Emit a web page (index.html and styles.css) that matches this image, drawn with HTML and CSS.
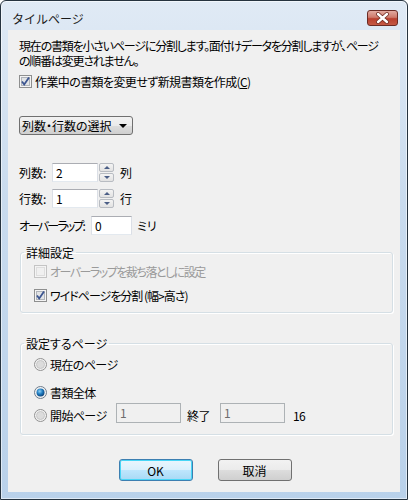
FILE: index.html
```html
<!DOCTYPE html>
<html lang="ja">
  <head>
    <meta charset="UTF-8" />
    <meta name="viewport" content="width=device-width, initial-scale=1.0" />
    <title>タイルページ</title>
    <link rel="stylesheet" href="styles.css">
  </head>

  <body>
    <div class="window">
      <div class="titlebar">
        <span class="title">タイルページ</span>
        <div class="close">
          <svg width="29" height="14" viewBox="0 0 29 14">
            <path d="M10 3 L19 11 M19 3 L10 11" stroke="#6e2a22" stroke-width="4" stroke-linecap="round" fill="none" />
            <path d="M10 3 L19 11 M19 3 L10 11" stroke="#ffffff" stroke-width="2.4" stroke-linecap="round" fill="none" />
          </svg>
        </div>
      </div>

      <div class="client">
        <p class="desc">現在の書類を小さいページに分割します。面付けデータを分割しますが、ページ<br />の順番は変更されません。</p>

        <div class="check-row check-main">
          <svg class="box" width="13" height="13" viewBox="0 0 13 13">
            <rect x="0.5" y="0.5" width="12" height="12" fill="#f4f4f4" stroke="#8e8f8f" />
            <rect x="2.5" y="2.5" width="8" height="8" fill="#e2e4e6" stroke="#b0b4ba" />
            <path d="M3 6.5 L5.2 9.5 L10 2.5" stroke="#3c5590" stroke-width="1.8" fill="none" />
          </svg>
          <span>作業中の書類を変更せず新規書類を作成(<u>C</u>)</span>
        </div>

        <div class="dropdown">
          <span>列数・行数の選択</span>
          <span class="arrow"></span>
        </div>

        <div class="fields">
          <div class="field">
            <span class="lbl lbl-short">列数:</span>
            <span class="input">2</span>
            <span class="spin"><i class="up"></i><i class="down"></i></span>
            <span class="unit">列</span>
          </div>
          <div class="field">
            <span class="lbl lbl-short">行数:</span>
            <span class="input">1</span>
            <span class="spin"><i class="up"></i><i class="down"></i></span>
            <span class="unit">行</span>
          </div>
          <div class="field field-overlap">
            <span class="lbl lbl-long">オーバーラップ:</span>
            <span class="input input-small">0</span>
            <span class="unit">ミリ</span>
          </div>
        </div>

        <fieldset class="group group-detail">
          <legend>詳細設定</legend>
          <div class="check-row disabled">
            <svg class="box" width="13" height="13" viewBox="0 0 13 13">
              <rect x="0.5" y="0.5" width="12" height="12" fill="#f4f4f4" stroke="#c4c4c4" />
              <rect x="2.5" y="2.5" width="8" height="8" fill="#f0f0f0" stroke="#dedede" />
            </svg>
            <span>オーバーラップを裁ち落としに設定</span>
          </div>
          <div class="check-row">
            <svg class="box" width="13" height="13" viewBox="0 0 13 13">
              <rect x="0.5" y="0.5" width="12" height="12" fill="#f4f4f4" stroke="#8e8f8f" />
              <rect x="2.5" y="2.5" width="8" height="8" fill="#e2e4e6" stroke="#b0b4ba" />
              <path d="M3 6.5 L5.2 9.5 L10 2.5" stroke="#3c5590" stroke-width="1.8" fill="none" />
            </svg>
            <span>ワイドページを分割 (幅&gt;高さ)</span>
          </div>
        </fieldset>

        <fieldset class="group group-pages">
          <legend>設定するページ</legend>
          <div class="radio-row">
            <svg class="radio" width="13" height="13" viewBox="0 0 13 13">
              <circle cx="6.5" cy="6.5" r="6" fill="#f2f2f2" stroke="#929292" />
              <circle cx="6.5" cy="6.5" r="4" fill="#dcdcdc" stroke="#c8c8c8" />
            </svg>
            <span>現在のページ</span>
          </div>
          <div class="radio-row">
            <svg class="radio" width="13" height="13" viewBox="0 0 13 13">
              <defs>
                <radialGradient id="dot" cx="0.4" cy="0.35" r="0.7">
                  <stop offset="0" stop-color="#8fd0f5" />
                  <stop offset="0.5" stop-color="#1f7cc0" />
                  <stop offset="1" stop-color="#0b3d72" />
                </radialGradient>
              </defs>
              <circle cx="6.5" cy="6.5" r="6" fill="#f2f2f2" stroke="#6e7c8c" />
              <circle cx="6.5" cy="6.5" r="4" fill="url(#dot)" />
            </svg>
            <span>書類全体</span>
          </div>
          <div class="radio-row range-row">
            <svg class="radio" width="13" height="13" viewBox="0 0 13 13">
              <circle cx="6.5" cy="6.5" r="6" fill="#f2f2f2" stroke="#929292" />
              <circle cx="6.5" cy="6.5" r="4" fill="#dcdcdc" stroke="#c8c8c8" />
            </svg>
            <span class="range-lbl">開始ページ</span>
            <span class="input input-off">1</span>
            <span class="range-mid">終了</span>
            <span class="input input-off">1</span>
            <span class="range-total">16</span>
          </div>
        </fieldset>

        <div class="buttons">
          <button class="btn btn-default">OK</button>
          <button class="btn">取消</button>
        </div>
      </div>
    </div>
  </body>
</html>
```

FILE: styles.css
```css
body {
  margin: 0;
  background: #ffffff;
  font-family: "Noto Sans CJK JP", sans-serif;
  font-size: 12px;
  line-height: 13px;
  color: #000;
  font-feature-settings: "palt";
}

.window {
  width: 408px;
  height: 500px;
  box-sizing: border-box;
  border: 1px solid #26333f;
  border-radius: 6px 6px 0 0;
  padding: 0 7px 7px;
  display: flex;
  flex-direction: column;
  background: linear-gradient(#e0eaf5, #c9dbee 40%, #b9d1ea);
  box-shadow: inset 0 0 0 1px rgba(255, 255, 255, 0.55);
}

.titlebar {
  height: 29px;
  display: flex;
  align-items: flex-start;
  justify-content: space-between;
}

.title {
  margin: 11px 0 0 4px;
  color: #1a1a1a;
  font-feature-settings: normal;
}

.close {
  margin: 9px 2px 0 0;
  width: 31px;
  height: 16px;
  box-sizing: border-box;
  border: 1px solid #6b2b24;
  border-radius: 3px;
  background: linear-gradient(#e2aaa0, #cf7a6c 45%, #b9402f 55%, #c55a45);
  display: flex;
  align-items: center;
  justify-content: center;
}

.client {
  flex: 1;
  background: #f0f0f0;
  padding: 8px 9px 0 11px;
}

.desc {
  margin: 0;
  white-space: nowrap;
  letter-spacing: -1.2px;
  line-height: 15px;
}

.check-row {
  display: flex;
  align-items: center;
  height: 13px;
  margin-top: 7px;
  white-space: nowrap;
  letter-spacing: -1px;
}

.check-main {
  letter-spacing: -0.6px;
}

.check-row .box {
  flex: none;
  margin-right: 3px;
}

.check-row.disabled {
  color: #9a9a9a;
  letter-spacing: -1.5px;
}

.dropdown {
  margin-top: 28px;
  width: 114px;
  height: 19px;
  box-sizing: border-box;
  border: 1px solid #707070;
  border-radius: 3px;
  background: linear-gradient(#f2f2f2, #ebebeb 50%, #dddddd 51%, #cfcfcf);
  display: flex;
  align-items: center;
  justify-content: space-between;
  padding: 0 5px 0 2px;
}

.arrow {
  width: 0;
  height: 0;
  border-left: 4px solid transparent;
  border-right: 4px solid transparent;
  border-top: 4px solid #000;
}

.fields {
  margin-top: 28px;
}

.field {
  display: flex;
  align-items: center;
  height: 19px;
  margin-top: 7px;
}

.field:first-child {
  margin-top: 0;
}

.field-overlap {
  margin-top: 8px;
}

.lbl {
  white-space: nowrap;
}

.lbl-short {
  width: 33px;
}

.lbl-long {
  width: 72px;
  letter-spacing: -1.9px;
}

.input {
  width: 46px;
  height: 19px;
  box-sizing: border-box;
  border: 1px solid #abadb3;
  border-left-color: #dbdfe6;
  border-right-color: #dbdfe6;
  border-bottom-color: #e3e9ef;
  background: #fff;
  padding-left: 3px;
  line-height: 17px;
}

.input-small {
  width: 41px;
}

.spin {
  margin-left: 1px;
  width: 15px;
  height: 19px;
  display: flex;
  flex-direction: column;
  justify-content: space-between;
}

.spin i {
  height: 9px;
  box-sizing: border-box;
  border: 1px solid #b8bcc2;
  border-radius: 2px;
  background: linear-gradient(#f4f4f4, #e2e2e2);
  display: flex;
  align-items: center;
  justify-content: center;
}

.spin i::after {
  content: "";
  width: 0;
  height: 0;
  border-left: 3px solid transparent;
  border-right: 3px solid transparent;
}

.spin .up::after {
  border-bottom: 3px solid #4b5e86;
}

.spin .down::after {
  border-top: 3px solid #4b5e86;
}

.unit {
  margin-left: 6px;
}

.input-small + .unit {
  margin-left: 5px;
}

.group {
  margin: 11px -2px 0 1px;
  padding: 6px 0 10px;
  border: 1px solid #d5dfe5;
  border-radius: 3px;
  box-shadow: inset 1px 1px 0 #fff, 1px 1px 0 #fff;
  min-width: 0;
}

.group legend {
  margin-left: 3px;
  padding: 0 2px;
  line-height: 13px;
}

.group .check-row,
.group .radio-row {
  margin-left: 13px;
}

.group-detail .check-row {
  margin-top: 0;
}

.group-detail .check-row + .check-row {
  margin-top: 11px;
}

.group-pages {
  margin-top: 24px;
  padding: 8px 0 11px;
}

.radio-row {
  display: flex;
  align-items: center;
  height: 13px;
  letter-spacing: -0.6px;
}

.radio-row + .radio-row {
  margin-top: 15px;
}

.radio-row .radio {
  flex: none;
  margin-right: 3px;
}

.radio-row.range-row {
  margin-top: 4px;
  height: 20px;
  align-items: flex-end;
}

.range-lbl {
  width: 66px;
}

.input-off {
  width: 65px;
  height: 20px;
  line-height: 18px;
  background: #f0f0f0;
  border-color: #adb2b5;
  color: #6d6d6d;
}

.range-row .range-lbl,
.range-row .range-mid,
.range-row .range-total,
.range-row .radio {
  margin-bottom: 1px;
}

.range-mid {
  width: 33px;
  margin-left: 6px;
}

.range-total {
  margin-left: 8px;
}

.buttons {
  margin-top: 24px;
  display: flex;
  justify-content: center;
  gap: 25px;
}

.btn {
  width: 74px;
  height: 22px;
  border: 1px solid #707070;
  border-radius: 3px;
  background: linear-gradient(#f2f2f2, #ebebeb 50%, #dddddd 51%, #cfcfcf);
  font-family: "Noto Sans CJK JP", sans-serif;
  font-size: 12px;
  line-height: 13px;
  color: #000;
  padding: 0;
}

.btn-default {
  border-color: #3c7fb1;
  box-shadow: inset 0 0 0 1px #48d6f6;
  background: linear-gradient(#eaf6fd, #d9f0fc 50%, #bee6fd 51%, #a7d9f5);
}
```
